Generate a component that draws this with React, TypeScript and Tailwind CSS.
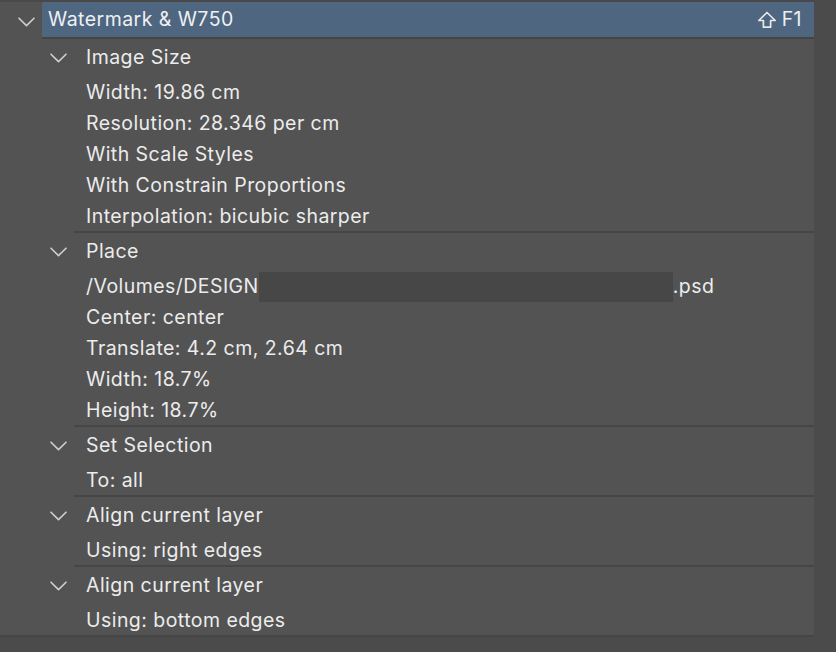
import React from 'react'

const groups = [
  {
    title: 'Image Size',
    items: [
      'Width: 19.86 cm',
      'Resolution: 28.346 per cm',
      'With Scale Styles',
      'With Constrain Proportions',
      'Interpolation: bicubic sharper',
    ],
  },
  {
    title: 'Place',
    items: ['__path__', 'Center: center', 'Translate: 4.2 cm, 2.64 cm', 'Width: 18.7%', 'Height: 18.7%'],
  },
  { title: 'Set Selection', items: ['To: all'] },
  { title: 'Align current layer', items: ['Using: right edges'] },
  { title: 'Align current layer', items: ['Using: bottom edges'] },
]

function Chevron() {
  return (
    <svg width="17" height="10" viewBox="0 0 17 10" fill="none">
      <path d="M1 1.2 L8.5 8.6 L16 1.2" stroke="#cfcfcf" strokeWidth="1.6" strokeLinecap="round" strokeLinejoin="round" />
    </svg>
  )
}

function ShiftIcon() {
  return (
    <svg width="20" height="18" viewBox="0 0 20 18" fill="none">
      <path
        d="M10 1.5 L18.2 9.5 H13.6 V16.2 H6.4 V9.5 H1.8 Z"
        stroke="#e8e8e8"
        strokeWidth="1.7"
        strokeLinejoin="round"
      />
    </svg>
  )
}

export default function App() {
  return (
    <div className="w-[836px] h-[652px] bg-[#4b4b4b] font-['Inter',sans-serif] text-[19.5px] tracking-[0.45px] text-[#ececec] overflow-hidden">
      <div className="w-[814px] bg-[#535353] border-t-2 border-[#494949]">
        {/* action header */}
        <div className="flex">
          <div className="w-[42px] flex items-center justify-center pl-[10px] pt-[2px]">
            <Chevron />
          </div>
          <div className="flex-1 border-b-2 border-[#454545]">
            <div className="h-[35px] bg-[#4f6680] flex items-center justify-between pl-[6px] pr-[12px] text-[#eef0f3]">
              <span>Watermark &amp; W750</span>
              <span className="flex items-center gap-[5px]">
                <ShiftIcon />
                <span>F1</span>
              </span>
            </div>
          </div>
        </div>

        {groups.map((group, gi) => (
          <div key={gi}>
            <div className="h-[37px] flex items-center pt-[1px]">
              <div className="w-[86px] flex pl-[50px]">
                <Chevron />
              </div>
              <span>{group.title}</span>
            </div>
            {group.items.map((item, ii) => (
              <div key={ii} className="h-[31px] flex items-center pl-[86px] pt-[3px]">
                {item === '__path__' ? (
                  <span className="flex items-center">
                    <span>/Volumes/DESIGN</span>
                    <span className="w-[414px] h-[30px] bg-[#474747]" />
                    <span>.psd</span>
                  </span>
                ) : (
                  <span>{item}</span>
                )}
              </div>
            ))}
            <div className={gi === groups.length - 1 ? 'h-[2px] bg-[#464646]' : 'ml-[74px] h-[2px] bg-[#464646]'} />
          </div>
        ))}
      </div>
    </div>
  )
}
